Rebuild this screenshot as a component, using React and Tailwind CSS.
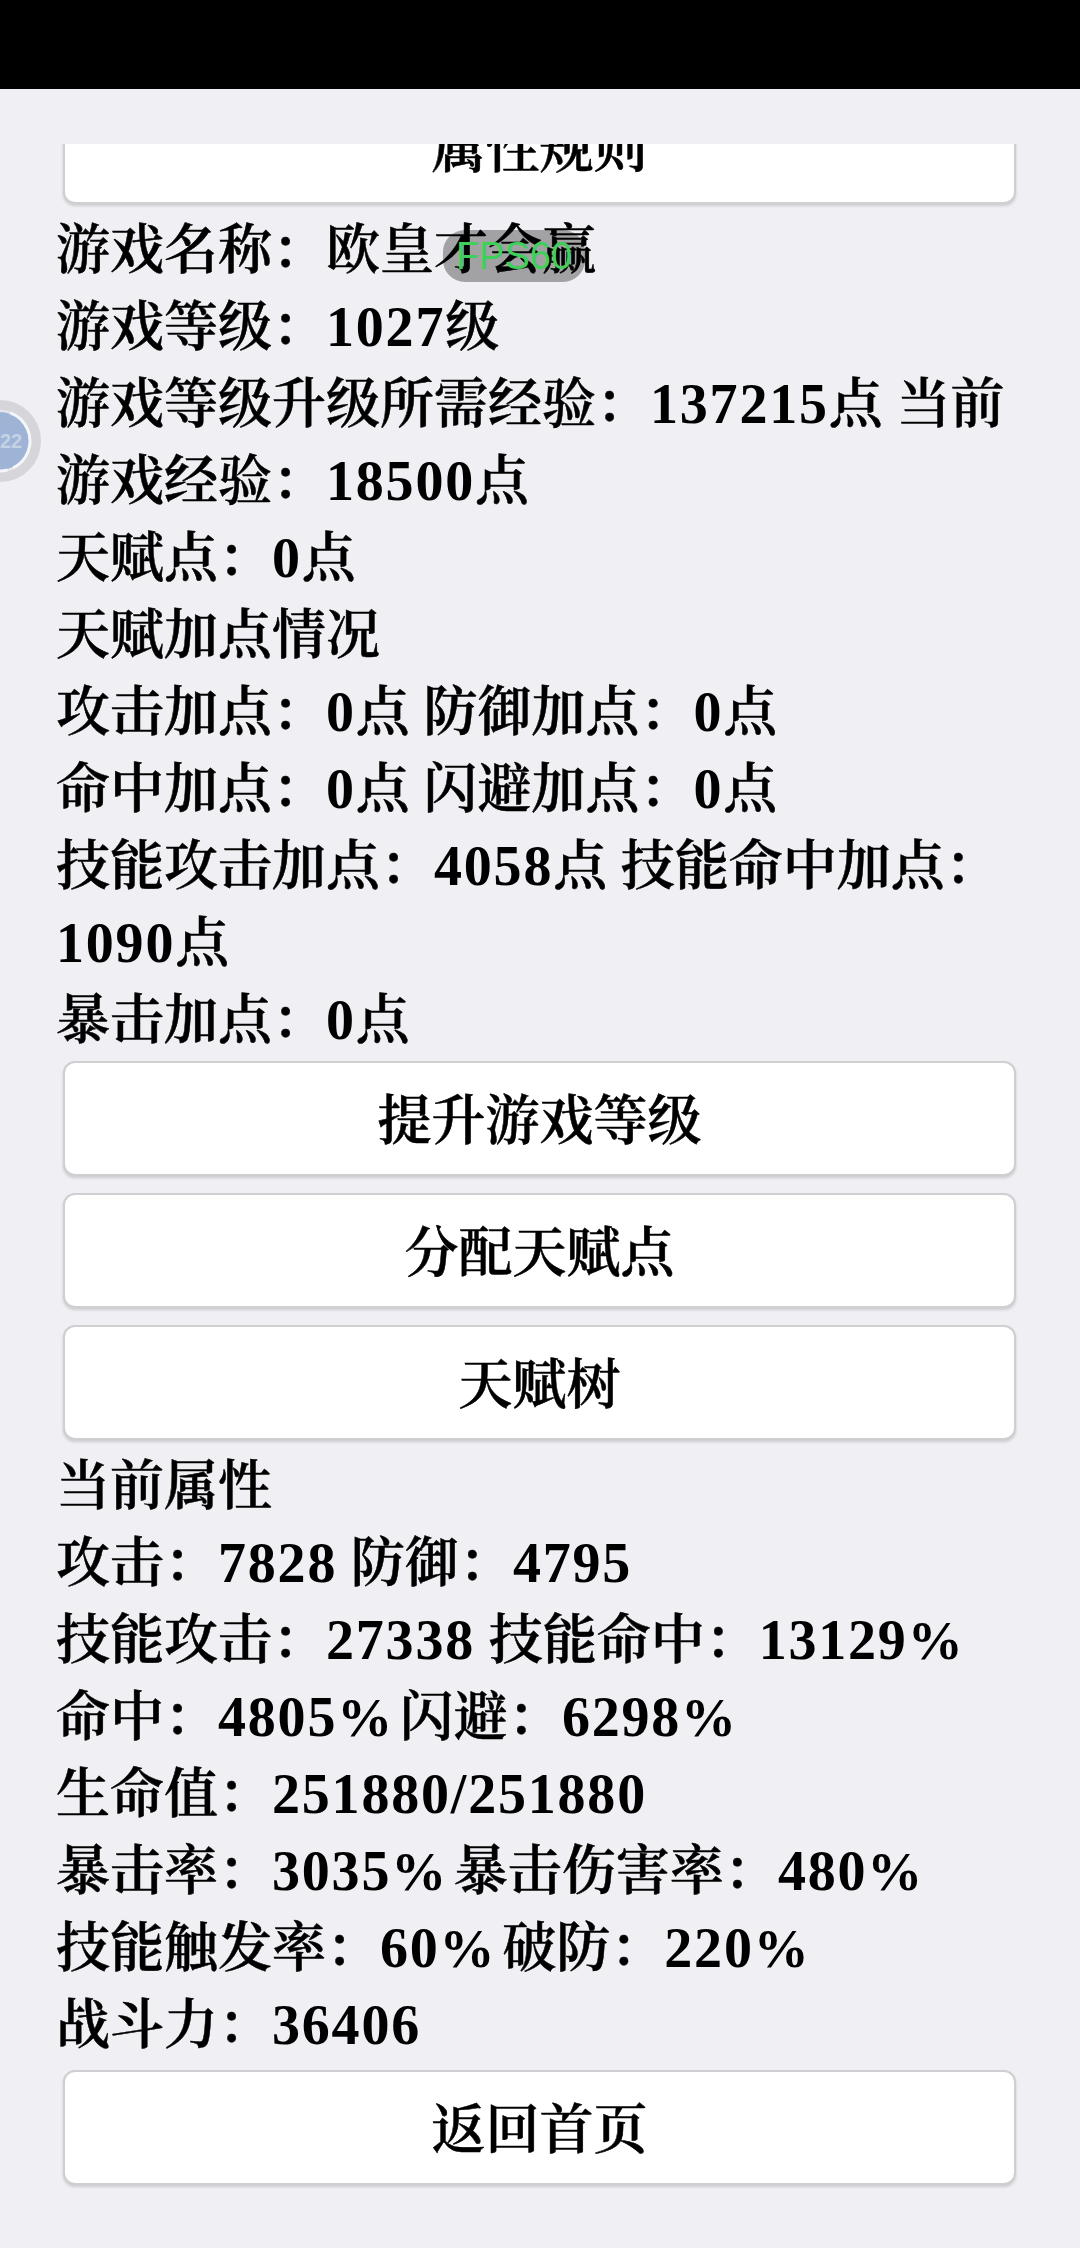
const font = { fontFamily: '"Noto Serif CJK SC", "Liberation Serif", serif' };

const lines1 = [
  '游戏名称：欧皇才会赢',
  '游戏等级：1027级',
  '游戏等级升级所需经验：137215点 当前',
  '游戏经验：18500点',
  '天赋点：0点',
  '天赋加点情况',
  '攻击加点：0点 防御加点：0点',
  '命中加点：0点 闪避加点：0点',
  '技能攻击加点：4058点 技能命中加点：',
  '1090点',
  '暴击加点：0点',
];

const lines2 = [
  '当前属性',
  '攻击：7828 防御：4795',
  '技能攻击：27338 技能命中：13129%',
  '命中：4805% 闪避：6298%',
  '生命值：251880/251880',
  '暴击率：3035% 暴击伤害率：480%',
  '技能触发率：60% 破防：220%',
  '战斗力：36406',
];

function Btn({ children, className }) {
  return (
    <div className={`mx-[7px] flex h-[115px] items-center justify-center rounded-[12px] border-2 border-[#cfcfd2] bg-white pb-[4px] text-black shadow-[0_2px_3px_rgba(0,0,0,0.15)] ${className}`}>
      {children}
    </div>
  );
}

// numbers sit in a heavier latin face than the chinese text
function Line({ text }) {
  const parts = text.split(/([0-9/]+|%)/);
  return (
    <div className="h-[77px] whitespace-nowrap">
      {parts.map((p, i) => {
        if (p === '%') {
          return <span key={i} className="text-[55px] font-bold tracking-[-6px] [-webkit-text-stroke:0px] [font-family:'Liberation_Serif',serif]">%</span>;
        }
        if (i % 2 === 1) {
          return <span key={i} className="text-[56px] font-bold tracking-[1.8px] [-webkit-text-stroke:0px] [font-family:'Liberation_Serif',serif]">{p}</span>;
        }
        return <span key={i}>{p}</span>;
      })}
    </div>
  );
}

export default function App() {
  return (
    <div className="relative flex h-[2248px] w-[1080px] flex-col overflow-hidden bg-[#efeff4] text-[54px] leading-[77px] font-semibold text-black [-webkit-text-stroke:0.5px_black]" style={font}>
      <div className="h-[89px] shrink-0 bg-black" />
      <div className="mt-[55px] flex-1 overflow-hidden">
        <div className="-mt-[55px] pl-[56px] pr-[57px]">
          <Btn className="mb-[3px]">属性规则</Btn>
          {lines1.map((t) => <Line key={t} text={t} />)}
          <Btn className="mt-[7px] mb-[17px]">提升游戏等级</Btn>
          <Btn className="mb-[17px]">分配天赋点</Btn>
          <Btn className="mb-[3px]">天赋树</Btn>
          {lines2.map((t) => <Line key={t} text={t} />)}
          <Btn className="mt-[11px]">返回首页</Btn>
        </div>
      </div>

      {/* fps badge */}
      <div className="absolute left-[443px] top-[230px] flex h-[52px] w-[142px] items-center justify-center rounded-[22px] bg-[rgba(0,0,0,0.32)] text-[38px] leading-none font-normal text-[#3fd05a] [-webkit-text-stroke:0px] [font-family:'Liberation_Sans',sans-serif]">
        FPS60
      </div>

      {/* floating ball */}
      <div className="absolute left-[-41px] top-[400px] flex h-[82px] w-[82px] items-center justify-center">
        <svg className="absolute inset-0" width="82" height="82" viewBox="0 0 82 82">
          <circle cx="41" cy="41" r="36" fill="#e9e9ed" stroke="#d6d6da" strokeWidth="10" />
          <circle cx="41" cy="41" r="29" fill="#9db4d6" />
          <circle cx="41" cy="41" r="30" fill="none" stroke="#f4f6fa" strokeWidth="3" strokeDasharray="70 6 8 6 60 200" transform="rotate(-70 41 41)" />
        </svg>
        <span className="relative pl-[22px] text-[20px] leading-none font-bold text-[#c5d1e4] [-webkit-text-stroke:0px] [font-family:'Liberation_Sans',sans-serif]">22</span>
      </div>
    </div>
  );
}
